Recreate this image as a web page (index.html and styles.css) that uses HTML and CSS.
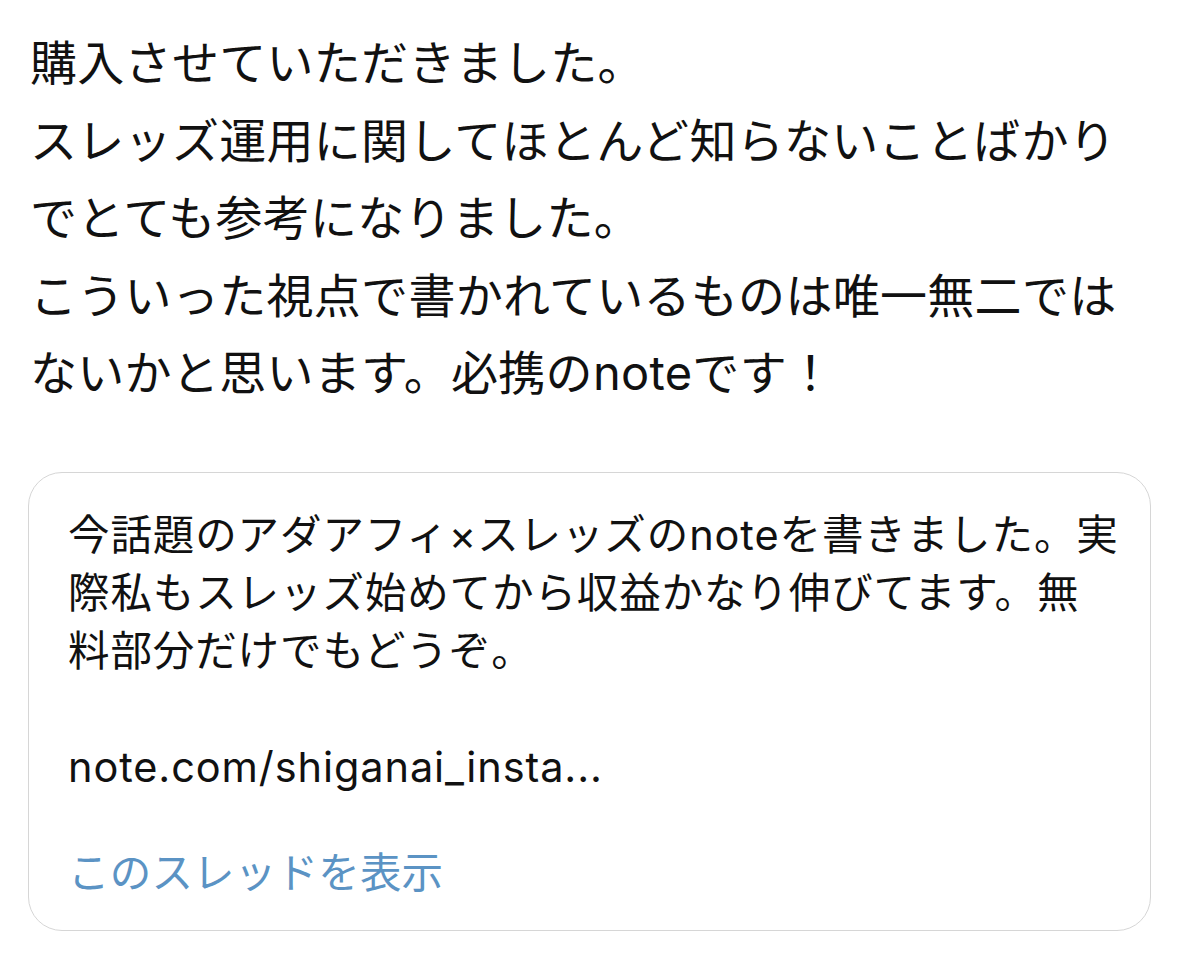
FILE: index.html
```html
<!DOCTYPE html>
<html lang="ja">
<head>
<meta charset="utf-8">
<title>post</title>
<link rel="stylesheet" href="styles.css">
</head>
<body>
<main class="post">
  <p class="post-text">購入させていただきました。<br>スレッズ運用に関してほとんど知らないことばかり<br>でとても参考になりました。<br>こういった視点で書かれているものは唯一無二では<br>ないかと思います。必携のnoteです！</p>
  <section class="quote">
    <p class="quote-text">今話題のアダアフィ×スレッズのnoteを書きました。実<br>際私もスレッズ始めてから収益かなり伸びてます。無<br>料部分だけでもどうぞ。</p>
    <p class="quote-link">note.com/shiganai_insta...</p>
    <a class="quote-more" href="#">このスレッドを表示</a>
  </section>
</main>
</body>
</html>
```

FILE: styles.css
```css
html, body {
  margin: 0;
  background: #ffffff;
}
body {
  font-family: "Inter", "Noto Sans CJK JP", sans-serif;
  color: #111111;
}
.post {
  padding: 24px 28px 0 28px;
}
.post-text {
  margin: 0 0 60px 2px;
  font-size: 47px;
  line-height: 77.5px;
  white-space: nowrap;
  letter-spacing: 0.3px;
}
.quote {
  border: 1px solid #d6d6d6;
  border-radius: 34px;
  padding: 33px 20px 28px 39px;
  display: flex;
  flex-direction: column;
}
.quote-text, .quote-link {
  margin: 0;
  font-size: 41.5px;
  line-height: 58px;
  white-space: nowrap;
  letter-spacing: 0.9px;
}
.quote-link {
  margin-top: 58px;
  margin-bottom: 48px;
}
.quote-more {
  font-size: 41.5px;
  line-height: 58px;
  letter-spacing: 0.2px;
  color: #5b93c4;
  text-decoration: none;
}
```
